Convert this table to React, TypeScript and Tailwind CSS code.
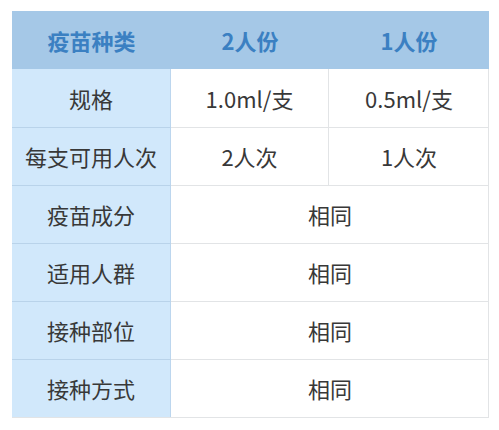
const rows: { label: string; values: string[] }[] = [
  { label: "规格", values: ["1.0ml/支", "0.5ml/支"] },
  { label: "每支可用人次", values: ["2人次", "1人次"] },
  { label: "疫苗成分", values: ["相同"] },
  { label: "适用人群", values: ["相同"] },
  { label: "接种部位", values: ["相同"] },
  { label: "接种方式", values: ["相同"] },
];

export default function App() {
  return (
    <div
      className="w-[499px] h-[430px] bg-white pt-[11px] pl-[12px]"
      style={{ fontFamily: '"Noto Sans CJK SC", "Noto Sans", sans-serif' }}
    >
      <div className="w-[477px] grid grid-cols-[159px_158px_160px] border-r border-b border-[#e2e4e6]">
        <div className="h-[58px] flex items-center justify-center bg-[#a5c8e7] text-[22px] font-bold text-[#3b80c2]">
          疫苗种类
        </div>
        <div className="h-[58px] flex items-center justify-center bg-[#a5c8e7] text-[22px] font-bold text-[#3b80c2]">
          2人份
        </div>
        <div className="h-[58px] flex items-center justify-center bg-[#a5c8e7] text-[22px] font-bold text-[#3b80c2]">
          1人份
        </div>
        {rows.map((row, i) => (
          <div key={row.label} className="contents">
            <div
              className={
                "h-[58px] flex items-center justify-center bg-[#d1e8fb] text-[22px] text-[#383838] border-r border-[#bcd6ee] " +
                (i > 0 ? "border-t border-t-[#b9d3ea]" : "")
              }
            >
              {row.label}
            </div>
            {row.values.length === 2 ? (
              <>
                <div
                  className={
                    "h-[58px] flex items-center justify-center text-[22px] text-[#383838] border-r border-[#e2e4e6] " +
                    (i > 0 ? "border-t border-t-[#e2e4e6]" : "")
                  }
                >
                  {row.values[0]}
                </div>
                <div
                  className={
                    "h-[58px] flex items-center justify-center text-[22px] text-[#383838] " +
                    (i > 0 ? "border-t border-t-[#e2e4e6]" : "")
                  }
                >
                  {row.values[1]}
                </div>
              </>
            ) : (
              <div className="col-span-2 h-[58px] flex items-center justify-center text-[22px] text-[#383838] border-t border-[#e2e4e6]">
                {row.values[0]}
              </div>
            )}
          </div>
        ))}
      </div>
    </div>
  );
}
